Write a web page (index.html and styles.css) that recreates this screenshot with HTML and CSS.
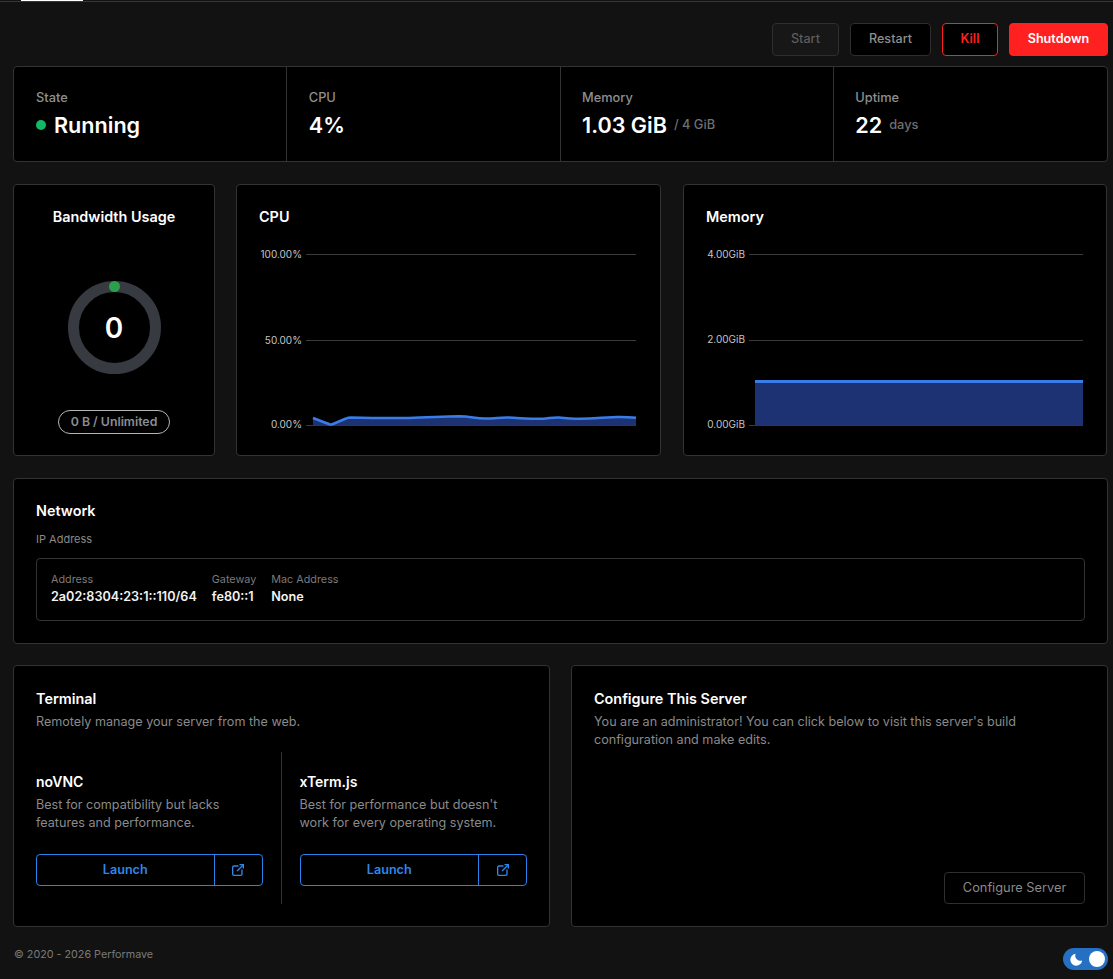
FILE: index.html
```html
<!DOCTYPE html>
<html lang="en">
<head>
<meta charset="utf-8">
<title>Server</title>
<link rel="stylesheet" href="styles.css">
</head>
<body>
<div class="tabs"><span class="tab-active"></span></div>
<main class="page">
  <div class="actions">
    <button class="btn btn-start">Start</button>
    <button class="btn btn-restart">Restart</button>
    <button class="btn btn-kill">Kill</button>
    <button class="btn btn-shutdown">Shutdown</button>
  </div>

  <section class="card stats">
    <div class="stat"><div class="stat-label">State</div><div class="stat-value"><span class="dot"></span>Running</div></div>
    <div class="stat"><div class="stat-label">CPU</div><div class="stat-value">4%</div></div>
    <div class="stat"><div class="stat-label">Memory</div><div class="stat-value">1.03 GiB<span class="unit">/ 4 GiB</span></div></div>
    <div class="stat"><div class="stat-label">Uptime</div><div class="stat-value">22<span class="unit">days</span></div></div>
  </section>

  <section class="charts">
    <div class="card bandwidth">
      <h3 class="title title-center">Bandwidth Usage</h3>
      <div class="ring">
        <svg width="93" height="93" viewBox="0 0 93 93">
          <circle cx="46.5" cy="46.5" r="41" fill="none" stroke="#373a40" stroke-width="11"/>
          <circle cx="46.5" cy="5.5" r="5.5" fill="#2b9f4b"/>
        </svg>
        <span class="ring-value">0</span>
      </div>
      <div class="pill">0 B / Unlimited</div>
    </div>

    <div class="card chart-card">
      <h3 class="title">CPU</h3>
      <svg class="chart" width="379" height="200" viewBox="0 0 379 200">
        <g class="grid">
          <line x1="47" x2="377" y1="14.5" y2="14.5"/>
          <line x1="47" x2="377" y1="100.5" y2="100.5"/>
          <line x1="47" x2="377" y1="185.5" y2="185.5"/>
        </g>
        <text class="axis" x="43" y="18">100.00%</text>
        <text class="axis" x="43" y="104">50.00%</text>
        <text class="axis" x="43" y="188">0.00%</text>
        <path class="area" d="M54 178 L71 184.5 Q72 184.8 74 184 L87 178.5 Q89 177.5 92 177.5 C110 178 130 178.2 150 178 C170 177.5 185 176.5 200 176.3 C212 176.5 216 178.5 226 178.5 C236 178.5 240 177.5 248 177.5 C262 178 270 179 284 178.8 C292 178 294 177.3 300 177.5 C306 178 310 179 318 178.8 C335 178 345 178 358 177 C366 176.8 372 177.3 377 177.8 L377 185.5 L54 185.5 Z"/>
        <path class="line" d="M54 178 L71 184.5 Q72 184.8 74 184 L87 178.5 Q89 177.5 92 177.5 C110 178 130 178.2 150 178 C170 177.5 185 176.5 200 176.3 C212 176.5 216 178.5 226 178.5 C236 178.5 240 177.5 248 177.5 C262 178 270 179 284 178.8 C292 178 294 177.3 300 177.5 C306 178 310 179 318 178.8 C335 178 345 178 358 177 C366 176.8 372 177.3 377 177.8"/>
      </svg>
    </div>

    <div class="card chart-card chart-card-last">
      <h3 class="title">Memory</h3>
      <svg class="chart" width="379" height="200" viewBox="0 0 379 200">
        <g class="grid">
          <line x1="43" x2="377" y1="14.5" y2="14.5"/>
          <line x1="43" x2="377" y1="100.5" y2="100.5"/>
          <line x1="43" x2="377" y1="185.5" y2="185.5"/>
        </g>
        <text class="axis" x="39" y="18">4.00GiB</text>
        <text class="axis" x="39" y="103">2.00GiB</text>
        <text class="axis" x="39" y="188">0.00GiB</text>
        <path class="area" d="M49 141 H377 V185.5 H49 Z"/>
        <path class="line line-mem" d="M49 141.5 H377"/>
      </svg>
    </div>
  </section>

  <section class="card network">
    <h3 class="title">Network</h3>
    <div class="net-sub">IP Address</div>
    <div class="net-box">
      <div class="net-col"><div class="net-label">Address</div><div class="net-value">2a02:8304:23:1::110/64</div></div>
      <div class="net-col"><div class="net-label">Gateway</div><div class="net-value">fe80::1</div></div>
      <div class="net-col"><div class="net-label">Mac Address</div><div class="net-value">None</div></div>
    </div>
  </section>

  <section class="bottom">
    <div class="card terminal">
      <h3 class="title">Terminal</h3>
      <p class="desc">Remotely manage your server from the web.</p>
      <div class="consoles">
        <div class="console console-left">
          <h4 class="console-title">noVNC</h4>
          <p class="desc console-desc">Best for compatibility but lacks features and performance.</p>
          <div class="launch">
            <span class="launch-main">Launch</span>
            <span class="launch-icon"><svg width="16" height="16" viewBox="0 0 24 24" fill="none" stroke="currentColor" stroke-width="2" stroke-linecap="round" stroke-linejoin="round"><path d="M12 6H6a2 2 0 0 0-2 2v10a2 2 0 0 0 2 2h10a2 2 0 0 0 2-2v-6"/><path d="M11 13l9-9"/><path d="M15 4h5v5"/></svg></span>
          </div>
        </div>
        <div class="console console-right">
          <h4 class="console-title">xTerm.js</h4>
          <p class="desc console-desc">Best for performance but doesn't work for every operating system.</p>
          <div class="launch">
            <span class="launch-main">Launch</span>
            <span class="launch-icon"><svg width="16" height="16" viewBox="0 0 24 24" fill="none" stroke="currentColor" stroke-width="2" stroke-linecap="round" stroke-linejoin="round"><path d="M12 6H6a2 2 0 0 0-2 2v10a2 2 0 0 0 2 2h10a2 2 0 0 0 2-2v-6"/><path d="M11 13l9-9"/><path d="M15 4h5v5"/></svg></span>
          </div>
        </div>
      </div>
    </div>
    <div class="card configure">
      <h3 class="title">Configure This Server</h3>
      <p class="desc">You are an administrator! You can click below to visit this server's build configuration and make edits.</p>
      <button class="btn btn-config">Configure Server</button>
    </div>
  </section>

  <footer class="footer">
    <span class="copy">© 2020 - 2026 Performave</span>
    <div class="toggle">
      <svg class="moon" width="13" height="13" viewBox="0 0 24 24"><path fill="#fff" d="M10 1.5a11 11 0 1 0 12.5 12.5A10 10 0 0 1 10 1.5z"/></svg>
      <span class="knob"></span>
    </div>
  </footer>
</main>
</body>
</html>
```
FILE: styles.css
```css
* { box-sizing: border-box; }
html, body { margin: 0; height: 100%; }
body {
  background: #121212;
  color: #fff;
  font-family: Inter, "Liberation Sans", sans-serif;
  overflow: hidden;
}
h3, h4, p { margin: 0; }

.tabs { height: 2px; border-bottom: 1px solid #373737; position: relative; }
.tab-active { position: absolute; left: 21px; top: 0; width: 62px; height: 1px; background: #fff; }

.page { padding: 21px 5px 0 13px; display: flex; flex-direction: column; }

.actions { display: flex; justify-content: flex-end; gap: 11px; height: 33px; margin-bottom: 10px; }
.btn {
  height: 33px;
  border-radius: 4px;
  border: 1px solid #2e2e2e;
  background: #000;
  font: 500 12.6px Inter, "Liberation Sans", sans-serif;
  color: #8e8e8e;
  padding: 0 0 2px;
}
.btn-start { width: 67px; background: #171717; color: #5c5c5c; }
.btn-restart { width: 81px; }
.btn-kill { width: 56px; border-color: #ff2020; color: #ff2020; font-weight: 600; }
.btn-shutdown { width: 99px; background: #ff2020; border-color: #ff2020; color: #fff; font-weight: 600; }

.card { background: #000; border: 1px solid #333; border-radius: 4px; }

.stats { display: grid; grid-template-columns: repeat(4, 1fr); height: 96px; margin-bottom: 22px; }
.stat { padding: 23px 22px 0 21.5px; border-right: 1px solid #333; }
.stat:first-child { padding-left: 22px; }
.stat:last-child { border-right: 0; }
.stat-label { font-size: 12.8px; font-weight: 500; line-height: 15px; color: #8f8f8f; margin-bottom: 6px; }
.stat-value { font-size: 21.6px; font-weight: 600; line-height: 28px; display: flex; align-items: center; }
.dot { width: 10px; height: 10px; border-radius: 50%; background: #12b864; margin-right: 8px; }
.unit { font-size: 12.8px; font-weight: 500; color: #6f6f6f; margin-left: 7px; }

.charts { display: grid; grid-template-columns: 202px 425px 425px; gap: 21px; height: 272px; margin-bottom: 22px; }
.title { font-size: 14.4px; font-weight: 600; line-height: 20px; color: #fff; }
.title-center { text-align: center; }
.bandwidth { padding: 22px 0 0; display: flex; flex-direction: column; align-items: center; }
.ring { position: relative; width: 93px; height: 93px; margin-top: 54px; }
.ring svg { display: block; }
.ring-value { position: absolute; inset: 0; display: flex; align-items: center; justify-content: center; font-size: 28px; font-weight: 600; }
.pill {
  margin-top: 36px;
  width: 112px; height: 24px;
  border: 1px solid #b5b5b5;
  border-radius: 12px;
  font-size: 12.3px; font-weight: 600;
  color: #8a8d94;
  display: flex; align-items: center; justify-content: center;
  padding-bottom: 2px;
}
.chart-card { padding: 22px 22px 0; }
.chart-card-last { margin-left: 1px; }
.chart { display: block; margin-top: 13px; }
.grid line { stroke: #3b3b3b; stroke-width: 1; }
.axis { font-size: 10px; fill: #c4c4c4; text-anchor: end; font-family: Inter, "Liberation Sans", sans-serif; }
.area { fill: #1c3273; }
.line { fill: none; stroke: #3b7de8; stroke-width: 2.5; }
.line-mem { stroke-width: 3; }

.network { height: 166px; padding: 22px; margin-bottom: 21px; }
.net-sub { font-size: 11px; line-height: 14px; color: #8a8a8a; margin-top: 11px; }
.net-box {
  margin-top: 12px; height: 63px;
  border: 1px solid #333; border-radius: 4px;
  padding: 14px 14px; display: flex; gap: 15px;
}
.net-label { font-size: 10.8px; line-height: 14px; color: #7a7a7a; margin-bottom: 1px; }
.net-value { font-size: 12.64px; line-height: 18px; font-weight: 600; color: #f2f2f2; }

.bottom { display: grid; grid-template-columns: 1fr 1fr; gap: 21px; height: 262px; margin-bottom: 21px; }
.terminal, .configure { padding: 23px 22px 22px; }
.desc { font-size: 12.6px; line-height: 18px; color: #8a8a8a; margin-top: 4px; }
.consoles { display: grid; grid-template-columns: 1fr 1fr; margin-top: 21px; height: 152px; }
.console { display: flex; flex-direction: column; }
.console-left { padding-right: 18px; border-right: 1px solid #333; }
.console-right { padding-left: 18px; }
.console-title { font-size: 14px; font-weight: 600; line-height: 20px; margin-top: 20px; }
.console-desc { margin-top: 4px; height: 36px; }
.launch {
  margin-top: 22px; height: 32px; display: flex;
  border: 1px solid #2b83ea; border-radius: 4px; color: #2f87ec;
  font-size: 12.6px; font-weight: 600;
}
.launch-main { flex: 1; display: flex; align-items: center; justify-content: center; padding-bottom: 1px; }
.launch-icon { width: 48px; border-left: 1px solid #2b83ea; display: flex; align-items: center; justify-content: center; }
.configure { display: flex; flex-direction: column; align-items: flex-start; }
.btn-config { width: 141px; height: 32px; margin-top: auto; margin-left: auto; color: #8a8a8a; font-weight: 400; font-size: 12.8px; padding: 0 0 2px; }

.footer { display: flex; justify-content: space-between; align-items: flex-start; height: 22px; }
.copy { font-size: 10.75px; line-height: 12px; color: #7a7a7a; padding: 1px 0 0 1px; }
.toggle { width: 45px; height: 22px; border-radius: 11px; background: #2670c4; position: relative; display: flex; align-items: center; padding-left: 7px; }
.knob { position: absolute; right: 3px; top: 3px; width: 16px; height: 16px; border-radius: 50%; background: #fff; }
```
